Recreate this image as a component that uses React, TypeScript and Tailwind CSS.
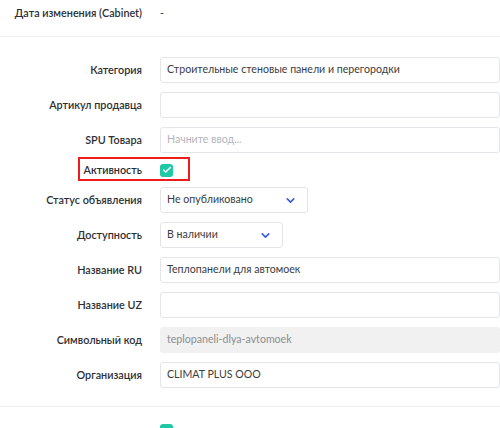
import { Check, ChevronDown } from "lucide-react";

const font = { fontFamily: "Lato, 'Open Sans', sans-serif" };

function Label(props: { children: React.ReactNode }) {
  return (
    <div className="w-[142px] shrink-0 text-right text-[10.8px] font-semibold text-[#2d2f33]">
      {props.children}
    </div>
  );
}

function TextRow(props: { label: string; value?: string; placeholder?: string; disabled?: boolean }) {
  const { label, value, placeholder, disabled } = props;
  return (
    <div className="flex items-center gap-[18px]">
      <Label>{label}</Label>
      <div
        className={
          disabled
            ? "flex h-[26px] w-[380px] items-center rounded-[3px] bg-[#f1f1f1] px-[7px] text-[10.6px] text-[#8a8d91]"
            : "flex h-[26px] w-[380px] items-center rounded-[3px] border border-[#e3e5e8] bg-white px-[6px] text-[10.6px] text-[#3a3c40]"
        }
      >
        {value ? value : <span className="text-[#b3b6ba]">{placeholder}</span>}
      </div>
    </div>
  );
}

function SelectRow(props: { label: string; value: string; width: string }) {
  const { label, value, width } = props;
  return (
    <div className="flex items-center gap-[18px]">
      <Label>{label}</Label>
      <div
        className={`flex h-[26px] items-center justify-between rounded-[3px] border border-[#e3e5e8] bg-white pl-[6px] pr-[10px] text-[10.6px] text-[#3a3c40] ${width}`}
      >
        <span>{value}</span>
        <ChevronDown size={13} strokeWidth={3} className="text-[#3f5bd8]" />
      </div>
    </div>
  );
}

function TealCheck() {
  return (
    <div className="flex h-[13px] w-[13px] items-center justify-center rounded-[3px] bg-[#1fc9a5]">
      <Check size={10} strokeWidth={3.5} className="text-white" />
    </div>
  );
}

export default function App() {
  return (
    <div className="h-[428px] w-[500px] overflow-hidden bg-white" style={font}>
      <div className="flex h-[26px] items-center gap-[18px] pt-[1px]">
        <Label>Дата изменения (Cabinet)</Label>
        <span className="text-[10.6px] text-[#3a3c40]">-</span>
      </div>
      <div className="mt-[10px] h-px bg-[#f0f0f0]" />

      <div className="mt-[20px] flex flex-col gap-[9px]">
        <TextRow label="Категория" value="Строительные стеновые панели и перегородки" />
        <TextRow label="Артикул продавца" />
        <TextRow label="SPU Товара" placeholder="Начните ввод..." />

        <div className="relative flex h-[16px] items-center gap-[18px]">
          <Label>Активность</Label>
          <TealCheck />
          <div className="absolute left-[78px] top-[-5px] h-[24px] w-[112px] border-2 border-[#f01c1c]" />
        </div>

        <SelectRow label="Статус объявления" value="Не опубликовано" width="w-[148px]" />
        <SelectRow label="Доступность" value="В наличии" width="w-[123px]" />
        <TextRow label="Название RU" value="Теплопанели для автомоек" />
        <TextRow label="Название UZ" />
        <TextRow label="Символьный код" value="teplopaneli-dlya-avtomoek" disabled />
        <TextRow label="Организация" value="CLIMAT PLUS OOO" />
      </div>

      <div className="mt-[18px] h-px bg-[#f0f0f0]" />
      <div className="mt-[17px] pl-[160px]">
        <TealCheck />
      </div>
    </div>
  );
}
